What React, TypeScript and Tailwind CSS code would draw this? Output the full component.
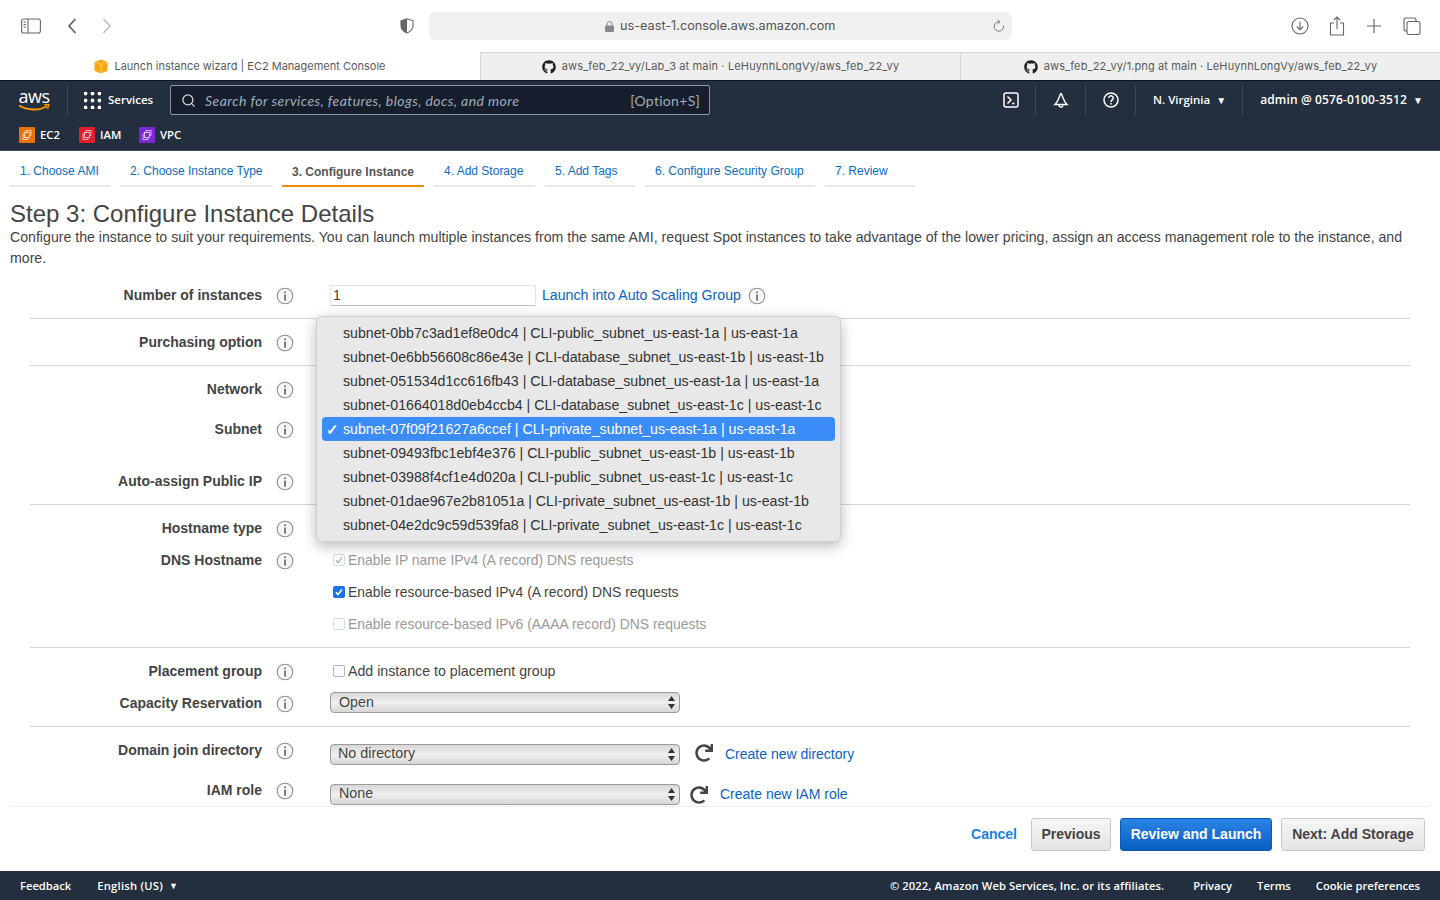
import React from "react";
import { FaGithub, FaRedo } from "react-icons/fa";
import { Search } from "lucide-react";

const Info = () => (
  <svg width="18" height="18" viewBox="0 0 18 18" className="shrink-0">
    <circle cx="9" cy="9" r="7.8" fill="#f6f6f6" stroke="#8f8f8f" strokeWidth="1.1" />
    <rect x="8.3" y="7.6" width="1.5" height="6" fill="#555" />
    <rect x="8.3" y="4.4" width="1.5" height="1.7" fill="#555" />
  </svg>
);

const Row = ({ label, plain, children }: { label?: string; plain?: boolean; children?: React.ReactNode }) => (
  <div className="flex h-8 items-center">
    <div className="w-[232px] text-right text-[14px] font-bold text-[#444]">{label}</div>
    <div className="ml-[14px] flex w-[18px] items-center justify-center pt-[2px]">{!plain && <Info />}</div>
    <div className="ml-[36px] flex flex-1 items-center">{children}</div>
  </div>
);

const Check = ({ state, children }: { state: "disabled" | "on" | "empty" | "off"; children: string }) => (
  <div className={`ml-[3px] flex items-center ${state === "off" ? "pt-[1px] text-[14.2px]" : "text-[13.9px]"} ${state === "on" || state === "off" ? "text-[#444]" : "text-[#9a9a9a]"}`}>
    {state === "on" ? (
      <span className="flex h-3 w-3 items-center justify-center rounded-[2px] bg-[#1a73e8]">
        <svg width="10" height="10" viewBox="0 0 10 10"><path d="M2 5.2l2 2.3 4-5" fill="none" stroke="#fff" strokeWidth="1.6" /></svg>
      </span>
    ) : (
      <span className={`flex h-3 w-3 items-center justify-center rounded-[2px] border bg-[#fbfbfb] ${state === "off" ? "border-[#b5b5b5]" : "border-[#d9d9d9]"}`}>
        {state === "disabled" && (
          <svg width="10" height="10" viewBox="0 0 10 10"><path d="M2 5.2l2 2.3 4-5" fill="none" stroke="#a8a8a8" strokeWidth="1.2" /></svg>
        )}
      </span>
    )}
    <span className="ml-[3px]">{children}</span>
  </div>
);

const Select = ({ text, pad, className }: { text: string; pad: string; className?: string }) => (
  <div className={`flex h-[21px] w-[350px] items-center justify-between rounded-[4px] border border-[#9b9b9b] bg-gradient-to-b from-[#d8d8d8] via-[#f0f0f0] to-[#d6d6d6] pr-[3px] text-[14.3px] text-[#444] ${pad} ${className ?? ""}`}>
    <span>{text}</span>
    <svg width="9" height="15" viewBox="0 0 9 15"><path d="M4.5 1L8 6H1zM4.5 14L1 9h7z" fill="#333" /></svg>
  </div>
);

const tabs = [
  { t: "1. Choose AMI", w: "w-[100px]" },
  { t: "2. Choose Instance Type", w: "w-[152px]" },
  { t: "3. Configure Instance", w: "w-[142px]", active: true },
  { t: "4. Add Storage", w: "w-[101px]" },
  { t: "5. Add Tags", w: "w-[90px]" },
  { t: "6. Configure Security Group", w: "w-[170px]" },
  { t: "7. Review", w: "w-[90px]" },
];

const subnets = [
  "subnet-0bb7c3ad1ef8e0dc4 | CLI-public_subnet_us-east-1a | us-east-1a",
  "subnet-0e6bb56608c86e43e | CLI-database_subnet_us-east-1b | us-east-1b",
  "subnet-051534d1cc616fb43 | CLI-database_subnet_us-east-1a | us-east-1a",
  "subnet-01664018d0eb4ccb4 | CLI-database_subnet_us-east-1c | us-east-1c",
  "subnet-07f09f21627a6ccef | CLI-private_subnet_us-east-1a | us-east-1a",
  "subnet-09493fbc1ebf4e376 | CLI-public_subnet_us-east-1b | us-east-1b",
  "subnet-03988f4cf1e4d020a | CLI-public_subnet_us-east-1c | us-east-1c",
  "subnet-01dae967e2b81051a | CLI-private_subnet_us-east-1b | us-east-1b",
  "subnet-04e2dc9c59d539fa8 | CLI-private_subnet_us-east-1c | us-east-1c",
];

const Section = ({ children, last }: { children: React.ReactNode; last?: boolean }) => (
  <div className={`mx-[30px] py-[7px] ${last ? "" : "border-b border-[#d5d5d5]"}`}>{children}</div>
);

const Divider = ({ className }: { className: string }) => <span className={`h-[30px] w-px bg-[#3d4a5a] ${className}`} />;

const ServiceChip = ({ bg, label, className }: { bg: string; label: string; className: string }) => (
  <div className={`flex w-[41px] items-center ${className}`}>
    <span className={`flex h-4 w-4 shrink-0 items-center justify-center rounded-[1px] ${bg}`}>
      <svg width="12" height="12" viewBox="0 0 12 12" fill="none" stroke="#fff" strokeWidth="0.8" opacity="0.85">
        <rect x="3.5" y="3.5" width="5" height="5" />
        <path d="M5 3.5V1.5h5v5H8.5M3.5 5H2v5.5h5V8.5" />
      </svg>
    </span>
    <span className="ml-[5px] mt-[2px] text-[11.3px] font-semibold text-white">{label}</span>
  </div>
);

export default function App() {
  return (
    <div className="relative flex h-[900px] w-[1440px] flex-col overflow-hidden bg-white font-['Liberation_Sans',Arial,sans-serif]">
      {/* Browser toolbar */}
      <div className="flex h-[52px] items-center bg-white font-['Inter',sans-serif]">
        <svg width="20" height="16" viewBox="0 0 20 16" className="ml-[21px]" fill="none" stroke="#666" strokeWidth="1.1">
          <rect x="0.6" y="1" width="18.8" height="14" rx="2" />
          <path d="M7 1v14M2.5 4h2.5M2.5 6.5h2.5M2.5 9h2.5" />
        </svg>
        <svg width="10" height="16" viewBox="0 0 10 16" className="ml-[26px]" fill="none" stroke="#555" strokeWidth="1.5"><path d="M8.5 1L2 8l6.5 7" /></svg>
        <svg width="10" height="16" viewBox="0 0 10 16" className="ml-[25px]" fill="none" stroke="#bdbdbd" strokeWidth="1.5"><path d="M1.5 1L8 8l-6.5 7" /></svg>
        <svg width="14" height="16" viewBox="0 0 14 16" className="ml-[288px]">
          <path d="M7 .8l6 2v5c0 3.6-2.6 5.9-6 7.2-3.4-1.3-6-3.6-6-7.2v-5z" fill="#fff" stroke="#666" strokeWidth="1.1" />
          <path d="M7 .8v14.2c-3.4-1.3-6-3.6-6-7.2v-5z" fill="#666" />
        </svg>
        <div className="ml-[15px] flex h-[28px] w-[583px] items-center rounded-[6px] bg-[#f0f0f0] pr-[7px]">
          <svg width="9" height="11" viewBox="0 0 9 11" className="ml-[176px]"><rect y="4.5" width="9" height="6.5" rx="1" fill="#8a8a8a" /><path d="M2 5V3a2.5 2.5 0 015 0v2" fill="none" stroke="#8a8a8a" /></svg>
          <span className="ml-[6px] text-[12.7px] text-[#555]">us-east-1.console.aws.amazon.com</span>
          <svg width="12" height="14" viewBox="0 0 12 14" className="ml-auto" fill="none" stroke="#777" strokeWidth="1"><path d="M10.5 6.5A4.700 4.700 0 1 1 6 2.800M4.800 .8L7 2.800 4.800 4.800" /></svg>
        </div>
        <svg width="18" height="18" viewBox="0 0 18 18" className="ml-[279px]" fill="none" stroke="#666" strokeWidth="1.1"><circle cx="9" cy="9" r="8" /><path d="M9 4.5v8M5.8 9.5L9 12.8l3.2-3.3" /></svg>
        <svg width="16" height="20" viewBox="0 0 16 20" className="ml-[20px]" fill="none" stroke="#666" strokeWidth="1.1"><path d="M5 7H1.5v12h13V7H11M8 13V1M4.8 4L8 1l3.2 3" /></svg>
        <svg width="14" height="14" viewBox="0 0 14 14" className="ml-[22px]" fill="none" stroke="#666" strokeWidth="1.2"><path d="M7 0v14M0 7h14" /></svg>
        <svg width="18" height="18" viewBox="0 0 18 18" className="ml-[22px]" fill="none" stroke="#666" strokeWidth="1.1"><rect x="4" y="4.5" width="13" height="13" rx="2" /><path d="M4 14H3a2 2 0 01-2-2V3a2 2 0 012-2h8a2 2 0 012 2v1.5" /></svg>
      </div>

      {/* Browser tabs */}
      <div className="flex h-[28px] font-['Inter',sans-serif] text-[11px] text-[#5a5a5a]">
        <div className="flex w-[480px] items-center justify-center bg-white">
          <svg width="14" height="15" viewBox="0 0 14 15" className="mr-[6px]"><path d="M7 .5l6.5 2.5v8.8L7 14.5.5 11.8V3z" fill="#f7a80d" /><path d="M7 5.5v9M.5 3L7 5.5 13.5 3" fill="none" stroke="#fcd27a" strokeWidth="0.8" /></svg>
          <span>Launch instance wizard | EC2 Management Console</span>
        </div>
        <div className="flex w-[480px] items-center justify-center border-t border-l border-[#d6d6d6] bg-[#efefef]">
          <FaGithub className="mr-[6px] text-[14px] text-[#1b1f23]" />
          <span className="tracking-[0.14px]">aws_feb_22_vy/Lab_3 at main · LeHuynhLongVy/aws_feb_22_vy</span>
        </div>
        <div className="flex w-[480px] items-center justify-center border-t border-l border-[#d6d6d6] bg-[#efefef]">
          <FaGithub className="mr-[6px] text-[14px] text-[#1b1f23]" />
          <span className="tracking-[0.12px]">aws_feb_22_vy/1.png at main · LeHuynhLongVy/aws_feb_22_vy</span>
        </div>
      </div>

      {/* AWS nav */}
      <div className="flex h-[71px] flex-col border-t border-[#10161f] border-b border-b-[#414b58] bg-[#232f3e] font-['Open_Sans',sans-serif] text-white">
        <div className="flex h-[38px] items-center">
          <div className="relative ml-[18px] h-[28px] w-[32px]">
            <span className="block text-center font-['Open_Sans',sans-serif] text-[18px] leading-[20px] tracking-[-0.5px] text-white">aws</span>
            <svg width="32" height="8" viewBox="0 0 32 8" className="absolute left-0 top-[18px]"><path d="M1 1.5c8 5 21 5.500 28 .5" fill="none" stroke="#f90" strokeWidth="1.8" /><path d="M26 .8l5-.5-1.500 4.500" fill="none" stroke="#f90" strokeWidth="1.300" /></svg>
          </div>
          <Divider className="ml-[17px]" />
          <svg width="17" height="17" viewBox="0 0 17 17" className="ml-[16px]" fill="#fff">
            {[1.5, 8.5, 15.5].flatMap((y) => [1.5, 8.5, 15.5].map((x) => <circle key={`${x}-${y}`} cx={x} cy={y} r="1.9" />))}
          </svg>
          <span className="ml-[7px] w-[45px] whitespace-nowrap text-[11.5px] font-semibold">Services</span>
          <div className="ml-[17px] flex h-[30px] w-[540px] items-center rounded-[2px] border border-[#8d99a8] bg-[#161e2d] pr-[9px]">
            <Search size={15} className="ml-[10px] text-[#d5dbdb]" strokeWidth={2} />
            <span className="ml-[9px] font-['Lato',sans-serif] text-[14px] italic tracking-[0.43px] text-[#a3adb9]">Search for services, features, blogs, docs, and more</span>
            <span className="ml-auto font-['Lato',sans-serif] text-[14px] tracking-[0.3px] text-[#a3adb9]">[Option+S]</span>
          </div>
          <svg width="16" height="16" viewBox="0 0 16 16" className="ml-[293px]" fill="none" stroke="#fff" strokeWidth="1.5"><rect x="1" y="1" width="14" height="14" rx="2" /><path d="M4.500 4.500L8 8l-3.500 3.500M9 11.500h2.500" /></svg>
          <Divider className="ml-[16px]" />
          <svg width="16" height="17" viewBox="0 0 16 17" className="ml-[17px]" fill="none" stroke="#fff" strokeWidth="1.4"><path d="M8 1.500C6 4 6 9 2 12.500h12C10 9 10 4 8 1.500zM6 12.500a2 2 0 004 1" /></svg>
          <Divider className="ml-[16px]" />
          <svg width="16" height="16" viewBox="0 0 16 16" className="ml-[17px]" fill="none" stroke="#fff" strokeWidth="1.5"><circle cx="8" cy="8" r="7" /><path d="M5.800 6a2.200 2.200 0 114 1.300C9 8.200 8 8.500 8 10M8 11v1.500" /></svg>
          <Divider className="ml-[16px]" />
          <span className="ml-[17px] text-[11.5px] font-semibold">N. Virginia</span>
          <span className="ml-[6px] text-[10px]">▼</span>
          <Divider className="ml-[16px]" />
          <span className="ml-[17px] text-[12px] font-semibold tracking-[0.13px]">admin @ 0576-0100-3512</span>
          <span className="ml-[6px] text-[10px]">▼</span>
        </div>
        <div className="flex flex-1 items-center">
          <ServiceChip bg="bg-[#e8710a]" label="EC2" className="ml-[19px]" />
          <ServiceChip bg="bg-[#dd1f2e]" label="IAM" className="ml-[19px]" />
          <ServiceChip bg="bg-[#7d28d4]" label="VPC" className="ml-[19px]" />
        </div>
      </div>

      {/* Wizard tabs */}
      <div className="ml-[10px] flex h-[36px] gap-[10px]">
        {tabs.map((t) => (
          <div
            key={t.t}
            className={`${t.w} flex items-center pl-[10px] text-[12px] ${t.active ? "border-b-2 border-[#f28c0f] pt-[8px] font-bold text-[#555]" : "border-b-2 border-[#e9e9e9] pt-[6px] text-[#0a6cc2]"}`}
          >
            <span className="whitespace-nowrap">{t.t}</span>
          </div>
        ))}
      </div>

      {/* Heading */}
      <div className="px-[10px] text-[#444]">
        <h1 className="mt-[13px] text-[24px] leading-[27px]">Step 3: Configure Instance Details</h1>
        <p className="text-[14.15px] leading-[21px]">
          Configure the instance to suit your requirements. You can launch multiple instances from the same AMI, request Spot instances to take advantage of the lower pricing, assign an access management role to the instance, and more.
        </p>
      </div>

      {/* Form */}
      <div className="mt-[3px] min-h-0 flex-1 overflow-hidden">
        <Section>
          <Row label="Number of instances">
            <div className="mt-[2px] flex h-[21px] w-[206px] items-center border border-[#e2e2e2] border-b-[#bdbdbd] pl-[2px] text-[14px] text-[#444]">1</div>
            <span className="ml-[6px] mt-[2px] text-[14.15px] text-[#0a62c2]">Launch into Auto Scaling Group</span>
            <span className="ml-[7px] mt-[2px]"><Info /></span>
          </Row>
        </Section>
        <Section>
          <Row label="Purchasing option" />
        </Section>
        <Section>
          <Row label="Network" />
          <div className="h-2" />
          <Row label="Subnet" />
          <div className="h-5" />
          <Row label="Auto-assign Public IP" />
        </Section>
        <Section>
          <Row label="Hostname type" />
          <Row label="DNS Hostname">
            <Check state="disabled">Enable IP name IPv4 (A record) DNS requests</Check>
          </Row>
          <Row plain>
            <Check state="on">Enable resource-based IPv4 (A record) DNS requests</Check>
          </Row>
          <Row plain>
            <Check state="empty">Enable resource-based IPv6 (AAAA record) DNS requests</Check>
          </Row>
        </Section>
        <Section>
          <Row label="Placement group">
            <Check state="off">Add instance to placement group</Check>
          </Row>
          <Row label="Capacity Reservation">
            <Select text="Open" pad="pl-[8px]" className="-mt-[1px]" />
          </Row>
        </Section>
        <Section last>
          <Row label="Domain join directory">
            <Select text="No directory" pad="pl-[7px]" className="mt-[8px]" />
            <FaRedo className="ml-[15px] mt-[6px] text-[18px] text-[#444]" />
            <span className="ml-[12px] mt-[8px] text-[14px] text-[#0a62c2]">Create new directory</span>
          </Row>
          <div className="h-2" />
          <Row label="IAM role">
            <Select text="None" pad="pl-[8px]" className="mt-[8px]" />
            <FaRedo className="ml-[10px] mt-[9px] text-[18px] text-[#444]" />
            <span className="ml-[12px] mt-[8px] text-[14px] text-[#0a62c2]">Create new IAM role</span>
          </Row>
        </Section>
      </div>

      {/* Wizard footer */}
      <div className="mx-[10px] flex h-[65px] shrink-0 items-center justify-end border-t border-[#eeeeee] pb-[10px] text-[14px] font-bold">
        <span className="text-[#1a7fe0]">Cancel</span>
        <div className="ml-[14px] flex h-[33px] w-[80px] items-center justify-center rounded-[3px] border border-[#c8c8c8] bg-gradient-to-b from-[#f6f6f6] to-[#e4e4e4] text-[#444]">Previous</div>
        <div className="ml-[9px] flex h-[33px] w-[152px] items-center justify-center rounded-[3px] border border-[#0a5bb5] bg-gradient-to-b from-[#2a83e6] to-[#0560c0] text-white">Review and Launch</div>
        <div className="ml-[9px] mr-[5px] flex h-[33px] w-[144px] items-center justify-center rounded-[3px] border border-[#c8c8c8] bg-gradient-to-b from-[#f6f6f6] to-[#e4e4e4] text-[#444]">Next: Add Storage</div>
      </div>

      {/* Bottom bar */}
      <div className="flex h-[29px] shrink-0 items-center bg-[#232f3e] pr-[20px] pt-[1px] font-['Open_Sans',sans-serif] text-[11.2px] font-semibold text-white">
        <span className="ml-[20px]">Feedback</span>
        <span className="ml-[26px] tracking-[0.25px]">English (US)</span>
        <span className="ml-[6px] text-[9px]">▼</span>
        <span className="ml-auto tracking-[0.09px]">© 2022, Amazon Web Services, Inc. or its affiliates.</span>
        <span className="ml-[29px]">Privacy</span>
        <span className="ml-[25px]">Terms</span>
        <span className="ml-[25px]">Cookie preferences</span>
      </div>

      {/* Open subnet menu */}
      <div className="absolute left-[316px] top-[316px] w-[525px] rounded-[6px] border border-[#cfcfcf] bg-[#e8e8e8] px-[5px] py-[4px] text-[14.18px] text-[#333] shadow-[0_4px_14px_rgba(0,0,0,0.28)]">
        {subnets.map((s, i) => (
          <div key={s} className={`relative flex h-6 items-center whitespace-nowrap pl-[21px] pt-[2px] ${i === 4 ? "rounded-[4px] bg-[#3b8cf7] text-white" : ""}`}>
            {i === 4 && <span className="absolute left-[4px] text-[15px] font-bold">✓</span>}
            {s}
          </div>
        ))}
      </div>
    </div>
  );
}
